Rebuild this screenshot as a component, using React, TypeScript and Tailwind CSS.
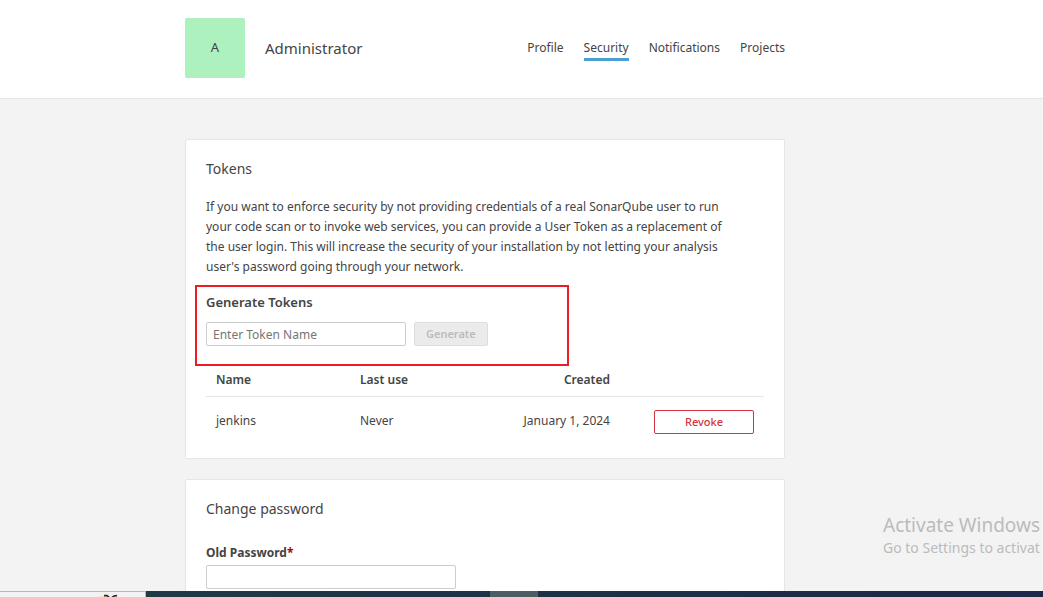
import React from "react";

const tabs = ["Profile", "Security", "Notifications", "Projects"];

const tokens = [{ name: "jenkins", lastUse: "Never", created: "January 1, 2024" }];

function Header() {
  return (
    <header className="border-b border-[#e6e6e6] bg-white pt-[18px] pb-5 pl-[185px]">
      <div className="flex max-w-[600px] items-center">
        <div className="flex size-[60px] items-center justify-center rounded-xs bg-[#adf1bf] text-[13px]">A</div>
        <h1 className="ml-5 text-[15px]">Administrator</h1>
        <nav className="ml-auto flex gap-5 text-[12px] leading-5">
          {tabs.map((tab) => (
            <a
              key={tab}
              href={`#${tab.toLowerCase()}`}
              className={
                tab === "Security"
                  ? "border-b-3 border-[#4b9fd5] pt-[3px]"
                  : "border-b-3 border-transparent pt-[3px]"
              }
            >
              {tab}
            </a>
          ))}
        </nav>
      </div>
    </header>
  );
}

function TokensCard() {
  return (
    <section className="rounded-xs border border-[#e6e6e6] bg-white px-5 pt-[18px] pb-[13px]">
      <h2 className="text-[14px] leading-[22px]">Tokens</h2>
      <p className="mt-[17px] text-[12px] leading-5">
        If you want to enforce security by not providing credentials of a real SonarQube user to run
        <br />
        your code scan or to invoke web services, you can provide a User Token as a replacement of
        <br />
        the user login. This will increase the security of your installation by not letting your analysis
        <br />
        user's password going through your network.
      </p>
      <form className="mt-2 -ml-[11px] max-w-[374px] border-2 border-[#ed1c24] py-[6px] pl-[9px]">
        <label htmlFor="token-name" className="block text-[13px] leading-[18px] font-semibold">
          Generate Tokens
        </label>
        <div className="mt-[11px] mb-3 flex gap-2">
          <input
            id="token-name"
            type="text"
            placeholder="Enter Token Name"
            className="h-6 w-[200px] rounded-xs border border-[#cdcdcd] bg-white px-[6px] text-[12px] placeholder:text-[#757575]"
          />
          <button
            type="submit"
            disabled
            className="h-6 rounded-xs border border-[#dddddd] bg-[#ebebeb] px-[11px] text-[11px] font-semibold text-[#bbbbbb]"
          >
            Generate
          </button>
        </div>
      </form>
      <table className="w-full table-fixed text-[12px]">
        <thead>
          <tr className="h-[30px] border-b border-[#e6e6e6]">
            <th className="w-[144px] px-[10px] pb-[2px] text-left font-semibold">Name</th>
            <th className="w-[120px] px-[10px] pb-[2px] text-left font-semibold">Last use</th>
            <th className="px-[10px] pb-[2px] text-right font-semibold">Created</th>
            <th className="w-[144px]" aria-label="Actions" />
          </tr>
        </thead>
        <tbody>
          {tokens.map((token) => (
            <tr key={token.name} className="h-[49px]">
              <td className="px-[10px]">{token.name}</td>
              <td className="px-[10px]">{token.lastUse}</td>
              <td className="px-[10px] text-right">{token.created}</td>
              <td className="px-[10px] pt-[3px] text-right">
                <button
                  type="button"
                  className="h-6 w-[100px] rounded-xs border border-[#d4333f] bg-white align-middle text-[11px] font-medium text-[#d4333f]"
                >
                  Revoke
                </button>
              </td>
            </tr>
          ))}
        </tbody>
      </table>
    </section>
  );
}

function PasswordCard() {
  return (
    <section className="rounded-xs border border-[#e6e6e6] bg-white px-5 pt-[18px] pb-10">
      <h2 className="text-[14px] leading-[22px]">Change password</h2>
      <label htmlFor="old-password" className="mt-[23px] block text-[12px] leading-5 font-bold">
        Old Password<span className="text-[#a4030f]">*</span>
      </label>
      <input
        id="old-password"
        type="password"
        className="mt-px h-6 w-[250px] rounded-xs border border-[#cdcdcd] bg-white px-[6px] text-[12px]"
      />
    </section>
  );
}

function Taskbar() {
  return (
    <footer className="flex h-[6px] shrink-0 overflow-hidden bg-linear-to-r from-[#213c45] to-[#1b2748]">
      <div className="w-[146px] border-t border-r border-[#b8b8b8] bg-[#f2f2f2] pl-[98px]">
        <svg width="24" height="5" viewBox="0 0 24 5" aria-hidden="true">
          <path d="M0 5 L5 3.6 L8 5 Z" fill="#f3e6bd" />
          <path d="M6 3.6 L9 3.6 L11 5.4 M14 5.4 L16 4 L19 3.6" stroke="#33231f" strokeWidth="1.6" fill="none" />
        </svg>
      </div>
      <div className="ml-[344px] w-12 bg-[#4c5d65]" />
    </footer>
  );
}

export default function App() {
  return (
    <div className="flex h-screen flex-col bg-[#f3f3f3] font-['Noto_Sans',sans-serif] text-[#444444]">
      <div className="relative min-h-0 flex-1 overflow-hidden">
        <Header />
        <main className="flex flex-col gap-5 pt-10 pl-[185px]">
          <div className="flex max-w-[600px] flex-col gap-5">
            <TokensCard />
            <PasswordCard />
          </div>
        </main>
        <aside className="absolute right-0 bottom-8 w-[160px] whitespace-nowrap text-[#bbbbbb]">
          <p className="text-[19px] leading-6">Activate Windows</p>
          <p className="text-[14px] leading-[22px]">Go to Settings to activat</p>
        </aside>
      </div>
      <Taskbar />
    </div>
  );
}
